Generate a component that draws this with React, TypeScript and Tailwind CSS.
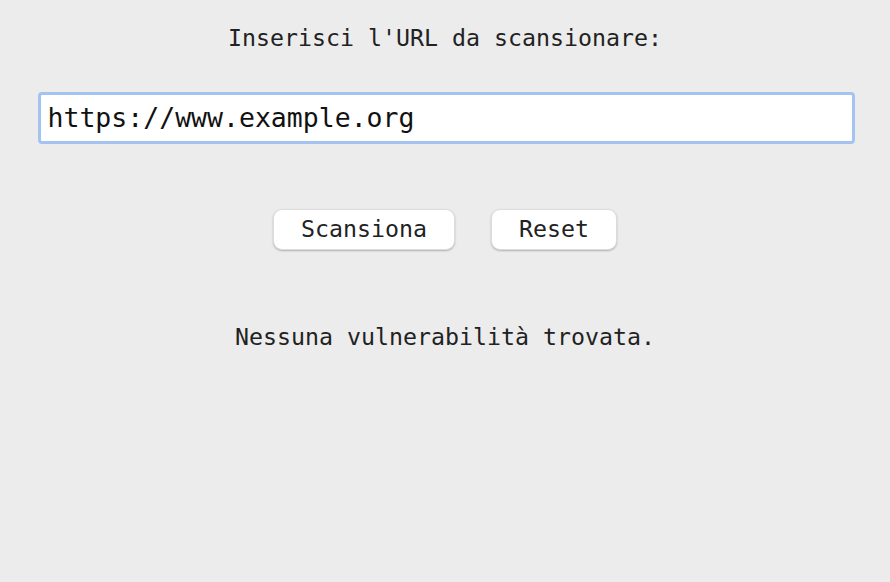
import { useState } from "react";

const mono = { fontFamily: '"DejaVu Sans Mono", "Liberation Mono", monospace' };

const App = () => {
  const [url, setUrl] = useState("https://www.example.org");
  const [result, setResult] = useState("Nessuna vulnerabilità trovata.");

  return (
    <div className="w-[890px] h-[582px] bg-[#ececec] text-[#222] flex flex-col items-center" style={mono}>
      <div className="mt-[24px] text-[23.25px] leading-[28px]">Inserisci l'URL da scansionare:</div>

      <div className="mt-[40px] ml-[2px] w-[817px] h-[52px] rounded-[4px] border-[3px] border-[#a5c3f0] bg-white flex items-center px-[7px]">
        <input
          autoFocus
          value={url}
          onChange={(e) => setUrl(e.target.value)}
          className="w-full outline-none bg-transparent text-[26.5px] text-[#111] caret-black"
          style={mono}
        />
      </div>

      <div className="mt-[65px] flex gap-[36px]">
        <button
          type="button"
          onClick={() => setResult("Nessuna vulnerabilità trovata.")}
          className="h-[41px] w-[182px] rounded-[9px] bg-white text-[23.25px] shadow-[0_1px_2px_rgba(0,0,0,0.25)] border border-[#dcdcdc]"
          style={mono}
        >
          Scansiona
        </button>
        <button
          type="button"
          onClick={() => {
            setUrl("");
            setResult("");
          }}
          className="h-[41px] w-[126px] rounded-[9px] bg-white text-[23.25px] shadow-[0_1px_2px_rgba(0,0,0,0.25)] border border-[#dcdcdc]"
          style={mono}
        >
          Reset
        </button>
      </div>

      <div className="mt-[73px] text-[23.25px] leading-[28px]">{result}</div>
    </div>
  );
};

export default App;
